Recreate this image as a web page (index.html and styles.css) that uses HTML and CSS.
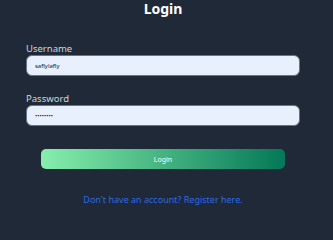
FILE: index.html
```html
<!DOCTYPE html>
<html>
<head>
<meta charset="utf-8">
<link rel="stylesheet" href="styles.css">
</head>
<body>
<div class="page">
  <h1 class="title">Login</h1>
  <form class="form">
    <div class="field">
      <label class="label">Username</label>
      <input class="input" type="text" value="saflylafly">
    </div>
    <div class="field">
      <label class="label">Password</label>
      <input class="input" type="password" value="saflylaf">
    </div>
    <button class="btn" type="button">Login</button>
  </form>
  <p class="register">Don't have an account? Register here.</p>
</div>
</body>
</html>
```

FILE: styles.css
```css
html, body {
  margin: 0;
  padding: 0;
  background: #1f2937;
  height: 100%;
  overflow: hidden;
}
body {
  font-family: "Noto Sans", "Open Sans", sans-serif;
}
.page {
  padding: 0 33px 0 26px;
}
.title {
  margin: 0;
  text-align: center;
  color: #ffffff;
  font-size: 14px;
  line-height: 18px;
  font-weight: 700;
}
.form {
  margin-top: 25px;
  display: flex;
  flex-direction: column;
}
.field {
  display: flex;
  flex-direction: column;
  margin-bottom: 17px;
}
.label {
  color: #d1d5db;
  font-size: 9.5px;
  line-height: 12px;
}
.input {
  box-sizing: border-box;
  height: 21px;
  margin: 0;
  padding: 0 8px;
  border: 1px solid #6b7280;
  border-radius: 6px;
  background: #e8f0fe;
  color: #111827;
  font-family: "Noto Sans", sans-serif;
  font-size: 6px;
  outline: none;
}
.btn {
  margin: 6px 15px 0;
  height: 20px;
  border: none;
  border-radius: 5px;
  background: linear-gradient(90deg, #86efac, #047857);
  color: #ffffff;
  font-family: "Noto Sans", sans-serif;
  font-size: 7px;
  padding: 0;
}
.register {
  margin: 25px 0 0;
  text-align: center;
  color: #2d6ae6;
  font-size: 9px;
  line-height: 12px;
}
```
